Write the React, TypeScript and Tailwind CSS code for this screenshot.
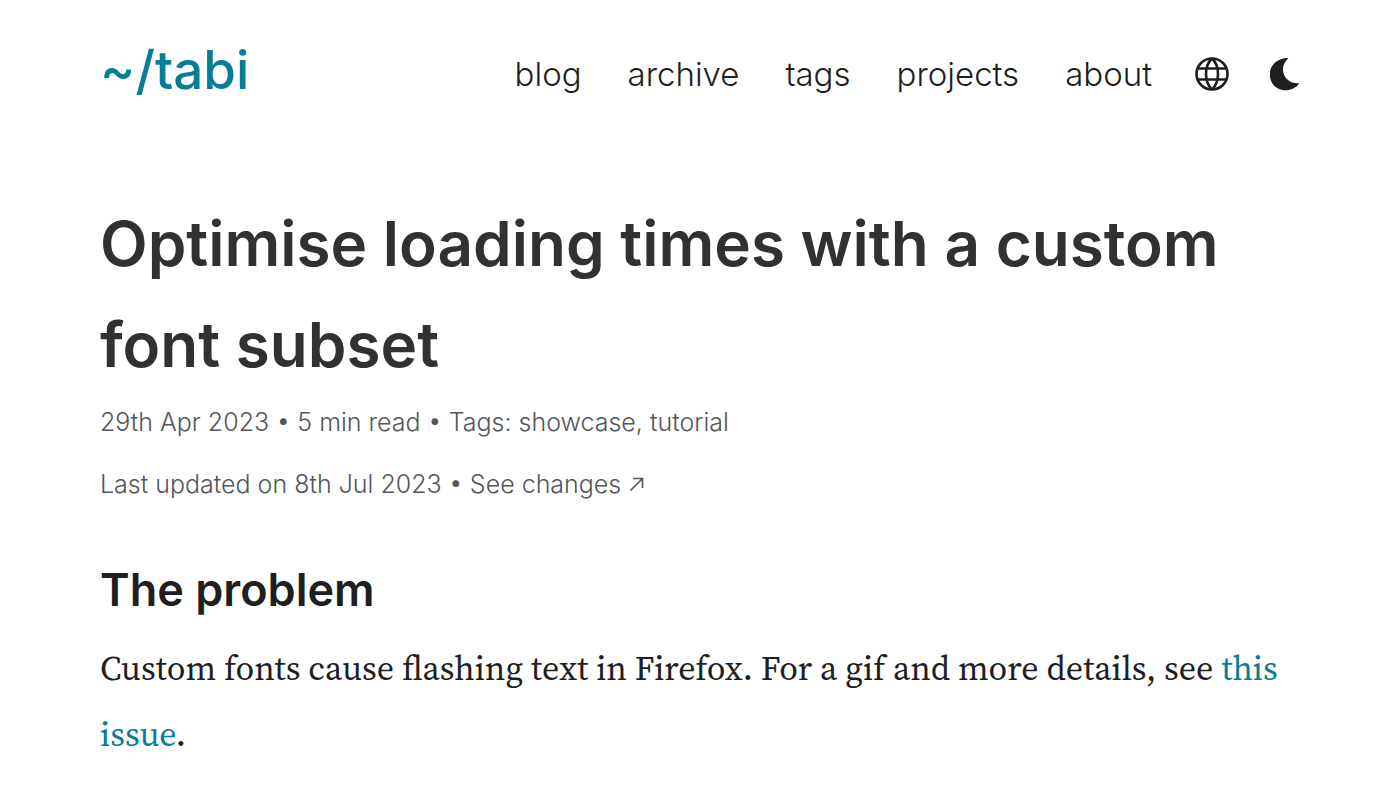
const nav = ['blog', 'archive', 'tags', 'projects', 'about'];

export default function App() {
  return (
    <div className="min-h-screen bg-white px-[100px] font-['Inter',sans-serif] text-[#1f1f22]">
      <header className="flex items-center justify-between pt-8">
        <a href="#" className="text-[53px] leading-[76px] font-medium text-[#087e96]">~/tabi</a>
        <div className="flex items-center gap-10 pt-2">
          <nav className="mr-0.5 flex items-center gap-[46px] text-[33px] leading-[48px] font-light">
            {nav.map((item) => (
              <a key={item} href="#">{item}</a>
            ))}
          </nav>
          <button type="button" aria-label="Language">
            <svg viewBox="0 0 36 36" className="size-9" fill="none" stroke="currentColor" strokeWidth="2.6">
              <circle cx="18" cy="18" r="15.5" />
              <path d="M18 2.5C10 10 10 26 18 33.5M18 2.5C26 10 26 26 18 33.5M4 12.5h28M4 23.5h28" />
            </svg>
          </button>
          <button type="button" aria-label="Dark mode">
            <svg viewBox="0 0 30 34" className="h-[34px] w-[30px]" fill="currentColor">
              <path d="M18.5 1C8 .5 -.5 8 -.3 17.5C-.1 27 7 33.2 15 33.2C21.500 33.200 26.500 30.500 29.300 26.200C21 27 14.500 22 13.200 15C12.200 9.500 14.500 4.500 18.500 1Z" />
            </svg>
          </button>
        </div>
      </header>
      <main>
        <h1 className="mt-[85px] text-[62px] leading-[101px] font-semibold text-[#313134]">Optimise loading times with a custom font subset</h1>
        <div className="-mt-1 text-[25px] leading-[62px] font-light text-[#55555c]">
          <p>29th Apr 2023 • 5 min read • Tags: <a href="#">showcase</a>, <a href="#">tutorial</a></p>
          <p>
            Last updated on 8th Jul 2023 •{' '}
            <a href="#" className="inline-flex items-center gap-2">
              See changes
              <svg viewBox="0 0 16 16" className="size-4" fill="none" stroke="currentColor" strokeWidth="1.7" aria-hidden="true">
                <path d="M1.500 14.500L13.500 2.500M4 2.500h9.500V12" />
              </svg>
            </a>
          </p>
        </div>
        <h2 className="mt-10 text-[45px] leading-[70px] font-semibold">The problem</h2>
        <p className="mt-[10px] font-['Source_Serif_4','Source_Serif_Pro','Noto_Serif','Liberation_Serif',serif] text-[34px] leading-[66px]">Custom fonts cause flashing text in Firefox. For a gif and more details, see <a href="#" className="text-[#087e96]">this issue</a>.</p>
      </main>
    </div>
  );
}
